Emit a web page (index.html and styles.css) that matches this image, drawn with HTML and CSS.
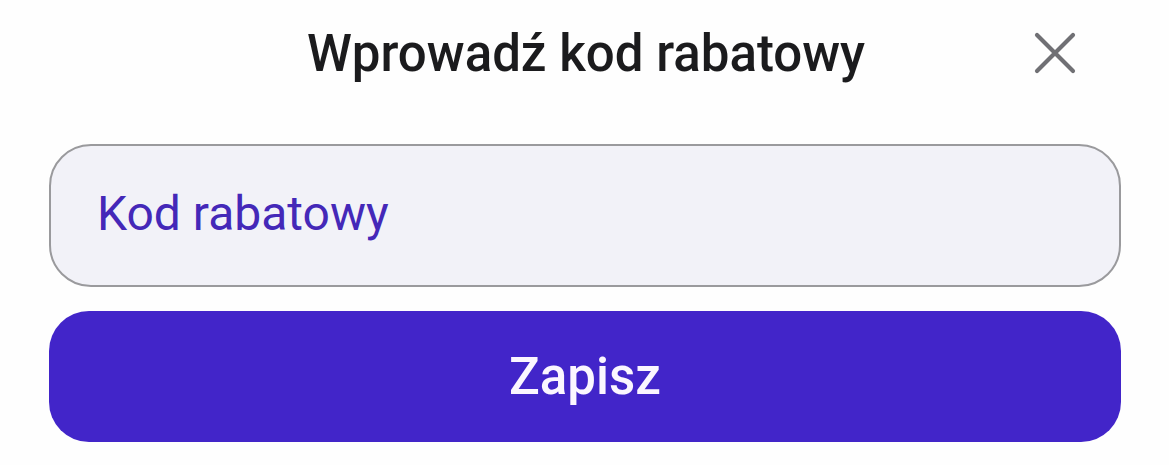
FILE: index.html
```html
<!DOCTYPE html>
<html lang="pl">
<head>
<meta charset="utf-8">
<link rel="stylesheet" href="styles.css">
</head>
<body>
<div class="sheet">
  <header class="head">
    <h1 class="title">Wprowadź kod rabatowy</h1>
    <button class="close" aria-label="Zamknij">
      <svg width="44" height="44" viewBox="0 0 44 44"><path d="M4 4L40 40M40 4L4 40" stroke="#707074" stroke-width="4.2" stroke-linecap="round" fill="none"/></svg>
    </button>
  </header>
  <div class="field">
    <span class="placeholder">Kod rabatowy</span>
  </div>
  <button class="save">Zapisz</button>
</div>
</body>
</html>
```
FILE: styles.css
```css
* { box-sizing: border-box; }
html, body { margin: 0; padding: 0; background: #fefefe; }
body { font-family: Roboto, "Noto Sans", sans-serif; width: 1169px; height: 465px; overflow: hidden; }
.sheet { padding: 0 48px 0 49px; display: flex; flex-direction: column; }
.head { position: relative; height: 144px; display: flex; justify-content: center; padding-top: 21px; padding-left: 2px; }
.title { margin: 0; font-size: 51px; font-weight: 500; color: #1b1b1d; line-height: 66px; letter-spacing: 0; }
.close { position: absolute; right: 44px; top: 31px; width: 44px; height: 44px; padding: 0; border: 0; background: none; display: flex; }
.field { height: 143px; border: 2px solid #9a9a9d; border-radius: 42px; background: #f2f2f8; display: flex; align-items: center; padding-left: 46px; padding-bottom: 4px; }
.placeholder { font-size: 48px; color: #4428b8; }
.save { margin-top: 24px; height: 131px; border: 0; border-radius: 40px; background: #4225c9; color: #fbf6ff; font-family: Roboto, sans-serif; font-size: 51px; font-weight: 500; padding: 0; }
```
